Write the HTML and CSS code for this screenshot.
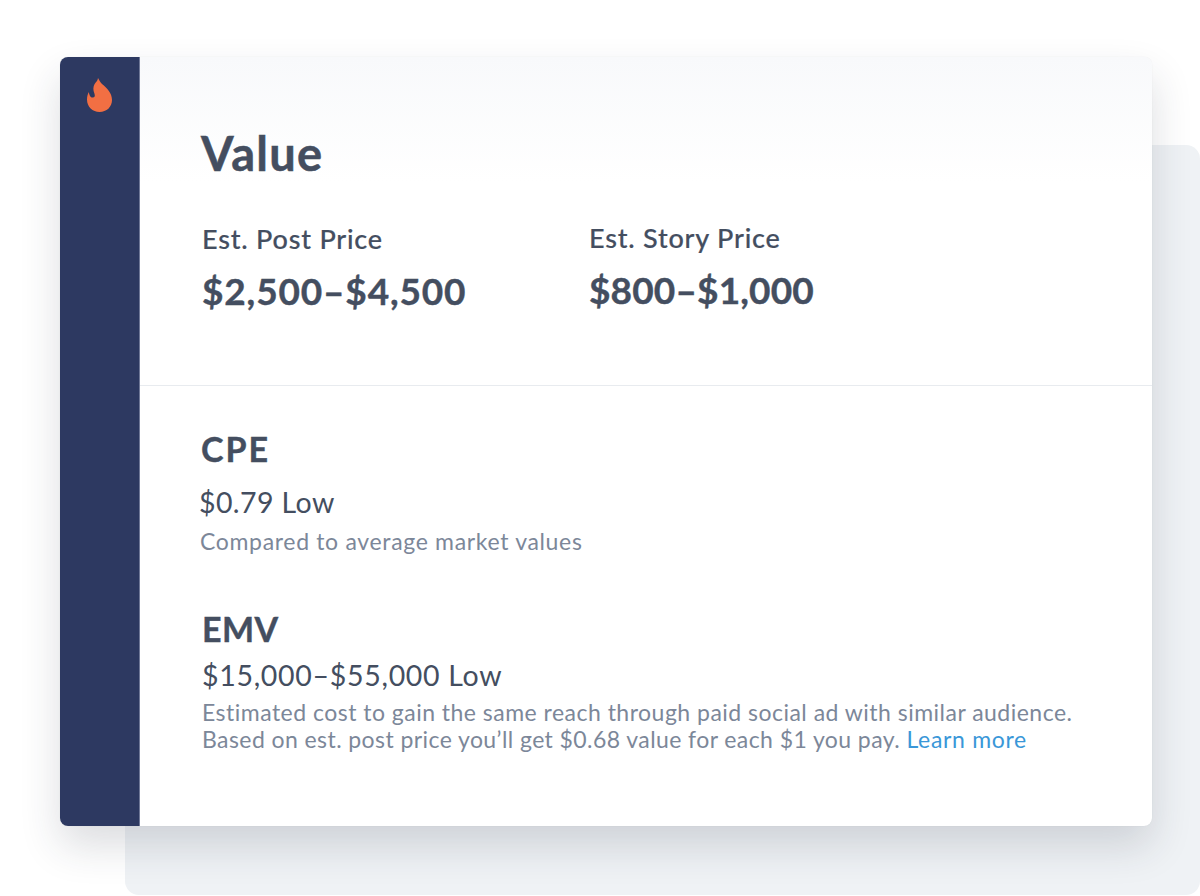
FILE: index.html
```html
<!DOCTYPE html>
<html lang="en">
<head>
<meta charset="utf-8">
<title>Value</title>
<link rel="stylesheet" href="styles.css">
</head>
<body>
<div class="stage">
  <div class="backdrop"></div>
  <div class="card">
    <aside class="rail">
      <svg class="flame" viewBox="0 0 25 34" width="25" height="34" aria-hidden="true">
        <path fill="#f26f43" d="M11 0C12.2 2.2 13 4 15 6C20 10 25 15 25 22C25 29 19.5 34 12.5 34C5.5 34 0 29 0 21.5C0 18.8 .7 16.2 1.8 14C2.2 16.6 3.2 19.4 5.4 19.6C7.6 19.8 8.4 18 7.4 15.5C6 12 6 9 7.6 6C8.6 4 10.8 3 11 0Z"/>
      </svg>
    </aside>
    <main class="content">
      <section class="top">
        <h1 class="title">Value</h1>
        <div class="prices">
          <div class="price price-post">
            <div class="price-label">Est. Post Price</div>
            <div class="price-value">$2,500–$4,500</div>
          </div>
          <div class="price price-story">
            <div class="price-label">Est. Story Price</div>
            <div class="price-value">$800–$1,000</div>
          </div>
        </div>
      </section>
      <section class="bottom">
        <div class="metric metric-cpe">
          <h2 class="metric-title">CPE</h2>
          <div class="metric-value">$0.79 Low</div>
          <p class="metric-note">Compared to average market values</p>
        </div>
        <div class="metric metric-emv">
          <h2 class="metric-title">EMV</h2>
          <div class="metric-value">$15,000–$55,000 Low</div>
          <p class="metric-note">Estimated cost to gain the same reach through paid social ad with similar audience.<br><span class="note-line">Based on est. post price you’ll get $0.68 value for each $1 you pay.</span> <a class="link" href="#">Learn more</a></p>
        </div>
      </section>
    </main>
  </div>
</div>
</body>
</html>
```
FILE: styles.css
```css
* { box-sizing: border-box; }
html, body { margin: 0; padding: 0; background: #fff; }
body { font-family: "Lato", "Liberation Sans", sans-serif; color: #444e60; }
.stage { position: relative; width: 1200px; height: 896px; overflow: hidden; padding: 57px 48px 0 60px; }
.backdrop { position: absolute; left: 125px; top: 145px; width: 1075px; height: 750px; background: #eff2f5; border-radius: 14px; }
.card { position: relative; display: flex; width: 1092px; height: 769px; background: #fff; border-radius: 8px; box-shadow: 0 20px 40px rgba(40, 44, 62, .16), 0 0 1px rgba(40, 44, 62, .12); overflow: hidden; }
.rail { flex: 0 0 80px; display: flex; justify-content: flex-start; align-items: flex-start; padding: 21px 0 0 27px; background: #2d3961; border-right: 1px solid #6f7897; }
.flame { display: block; }
.content { flex: 1; display: flex; flex-direction: column; min-width: 0; }
.top { height: 329px; padding: 70px 0 0 61px; border-bottom: 1px solid #e8ebef; background: linear-gradient(#f8f9fb 0, #fff 125px); }
.title { margin: 0; font-size: 47px; line-height: 52px; font-weight: 700; letter-spacing: 1.2px; -webkit-text-stroke: .5px #444e60; color: #444e60; }
.prices { display: flex; margin-top: 44px; }
.price-post { width: 387px; margin-left: 1px; }
.price-story { margin-top: -1px; }
.price-label { font-size: 27px; line-height: 32px; font-weight: 500; letter-spacing: .8px; -webkit-text-stroke: .2px #444e60; color: #444e60; }
.price-value { margin-top: 14px; font-size: 37px; line-height: 44px; font-weight: 700; letter-spacing: .85px; -webkit-text-stroke: .4px #444e60; color: #444e60; }
.price-story .price-value { letter-spacing: .15px; }
.bottom { padding: 42px 0 0 61px; }
.metric-title { margin: 0; font-size: 34px; line-height: 42px; font-weight: 700; -webkit-text-stroke: .4px #444e60; color: #444e60; }
.metric-value { font-size: 28.5px; line-height: 36px; letter-spacing: .7px; color: #444e60; }
.metric-note { margin: 0; font-size: 23px; line-height: 27px; letter-spacing: .48px; color: #7c8799; }
.note-line { letter-spacing: .42px; }
.link { color: #3a97d8; text-decoration: none; letter-spacing: .68px; }
.metric-cpe .metric-title { letter-spacing: 2px; }
.metric-cpe .metric-value { margin: 14px 0 0 -2px; letter-spacing: .4px; }
.metric-cpe .metric-note { margin: 8px 0 0 -1px; letter-spacing: .67px; }
.metric-emv { margin-top: 53px; }
.metric-emv .metric-title { margin-left: 1px; letter-spacing: .4px; }
.metric-emv .metric-value { margin: 7px 0 0 1px; }
.metric-emv .metric-note { margin: 6px 0 0 1px; }
```
